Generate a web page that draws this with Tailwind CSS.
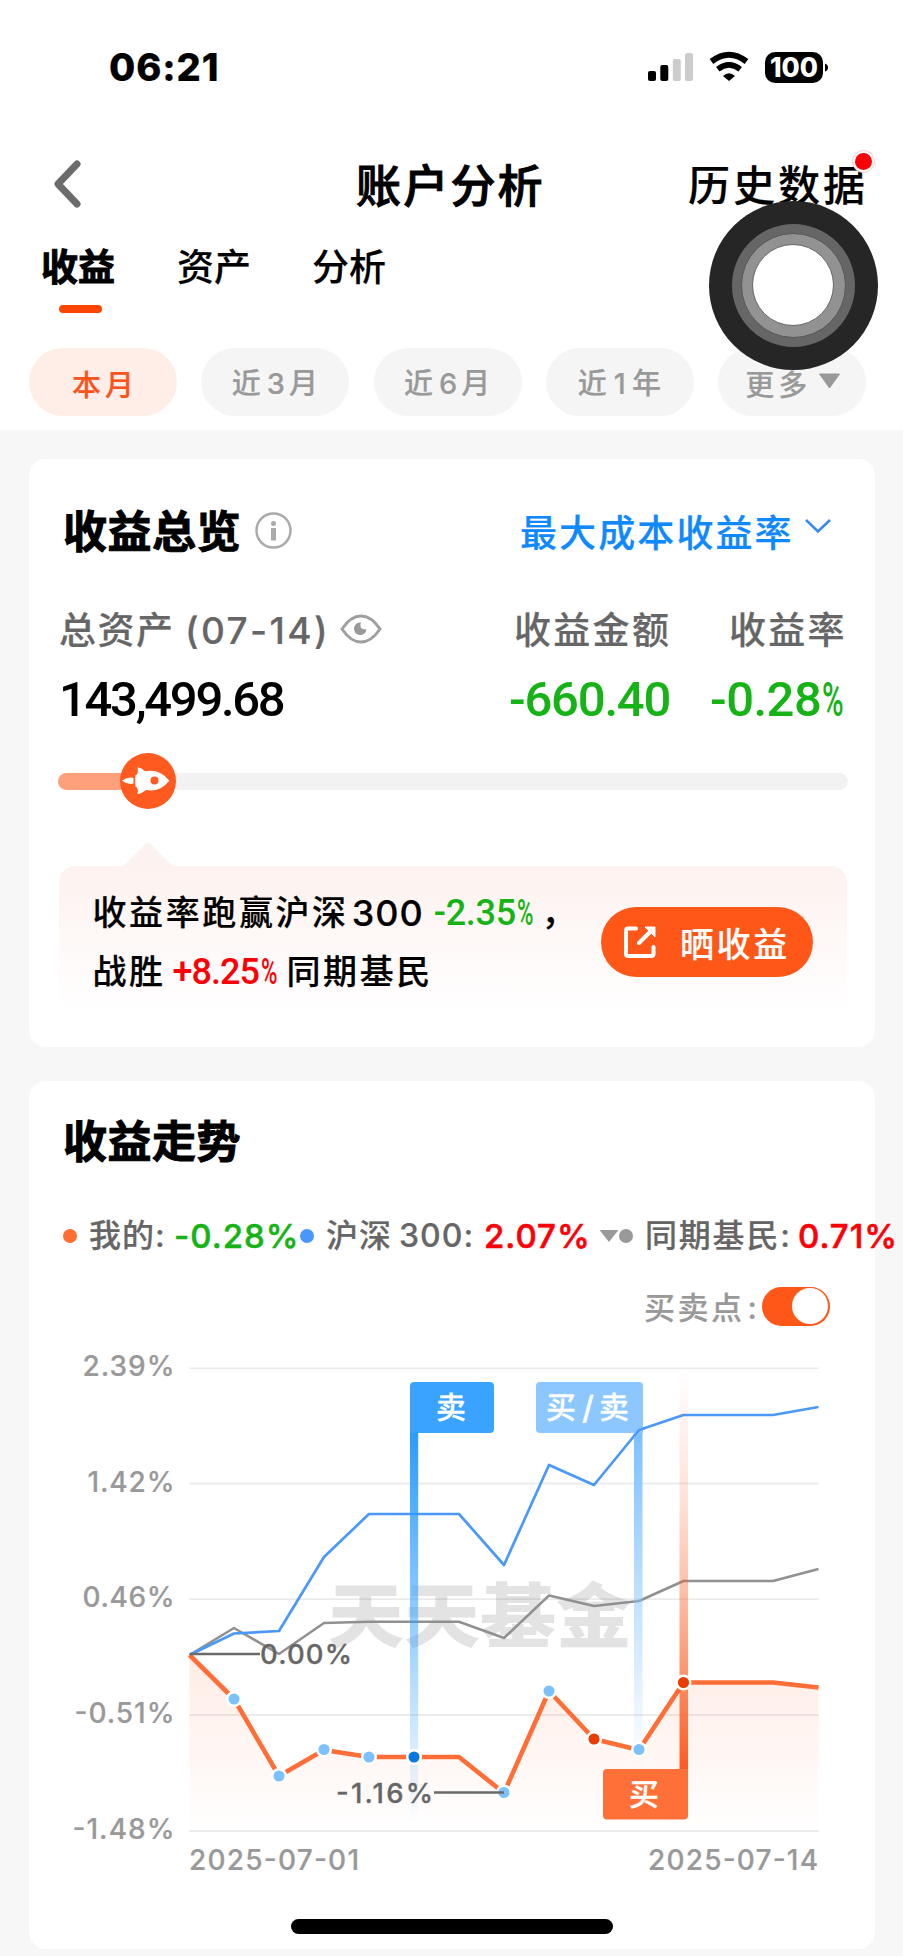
<!DOCTYPE html>
<html lang="zh-CN">
<head>
<meta charset="utf-8">
<title>账户分析</title>
<script src="https://cdn.jsdelivr.net/npm/@tailwindcss/browser@4"></script>
</head>
<body class="bg-white">
<div class="relative flex h-[1957px] w-[904px] flex-col overflow-hidden bg-white font-['Inter','Noto_Sans_CJK_SC',sans-serif] leading-none font-medium whitespace-nowrap text-black [-webkit-text-stroke:0.2px]">

  <!-- status bar -->
  <div class="flex h-[134px] shrink-0 items-center pl-[109px]">
    <div class="w-[539px] text-[38px] font-extrabold tracking-[0.9px]">06:21</div>
    <svg class="h-[36px] w-[182px]" viewBox="648 49 182 36">
      <g><rect x="648" y="71" width="8" height="10" rx="2"/><rect x="660.3" y="65" width="8" height="16" rx="2"/><rect x="672.8" y="59" width="8" height="22" rx="2" fill="#ccc"/><rect x="685" y="53" width="8" height="28" rx="2" fill="#ccc"/></g>
      <path d="M711.5 61.500Q729 48 746.500 61.500" fill="none" stroke="#000" stroke-width="6"/>
      <path d="M717.800 69.300Q729 60.500 740.200 69.300" fill="none" stroke="#000" stroke-width="5.600"/>
      <path d="M723 76Q729 70.500 735 76L729 81Z"/>
      <rect x="765" y="52" width="58" height="31" rx="10"/>
      <path d="M825 63.500Q828 64.500 828 67.500T825 71.500Z"/>
      <text x="794" y="77" text-anchor="middle" textLength="48" lengthAdjust="spacingAndGlyphs" font-size="26.500" font-weight="800" fill="#fff">100</text>
    </svg>
  </div>

  <!-- navigation -->
  <div class="flex h-[103px] shrink-0 items-center">
    <svg class="-mt-[3px] ml-[50px] h-[52px] w-[306px]" viewBox="50 158 306 52"><path d="M77 164L58 184L77 204" fill="none" stroke="#6b6b6b" stroke-width="7" stroke-linecap="round" stroke-linejoin="round"/></svg>
    <h1 class="w-[332px] pt-px text-[45px] font-medium tracking-[2.2px] [-webkit-text-stroke:1px]">账户分析</h1>
    <div class="relative text-[42px] tracking-[3px]">历史数据
      <div class="absolute -top-[15px] left-[164px] size-[23px] rounded-full border border-red-200 bg-white p-[2px]"><div class="size-full rounded-full bg-[#fb0007]"></div></div>
    </div>
  </div>

  <!-- section tabs -->
  <div class="flex h-[79px] shrink-0 pt-[11px] text-[37px]">
    <div class="ml-[41px] flex w-[136px] flex-col gap-[19px] pt-px">
      <b class="font-bold [-webkit-text-stroke:1px]">收益</b><i class="ml-[18px] block h-[8px] w-[43px] rounded-full bg-[#ff4500]"></i>
    </div>
    <div class="w-[135px] pt-px">资产</div>
    <div class="pt-px">分析</div>
  </div>

  <!-- period filter -->
  <div class="flex h-[114px] shrink-0 gap-[24.300px] pt-[32px] pl-[29px] text-[29px] tracking-[4px] text-[#999]">
    <div class="flex h-[68px] w-[148px] items-center justify-center rounded-full bg-[#ffeee8] pt-[6px] pl-[4px] text-[#fa541c]">本月</div>
    <div class="flex h-[68px] w-[148px] items-center justify-center rounded-full bg-[#f5f5f5] pt-[2px] pl-[3px]">近<span class="ml-[2px]">3</span>月</div>
    <div class="flex h-[68px] w-[148px] items-center justify-center rounded-full bg-[#f5f5f5] pt-[2px] pl-[3px]">近<span class="ml-[2px]">6</span>月</div>
    <div class="flex h-[68px] w-[148px] items-center justify-center rounded-full bg-[#f5f5f5] pt-[2px] pl-[3px]">近<span class="mr-[2px] ml-[3px]">1</span>年</div>
    <div class="flex h-[68px] w-[148px] items-center gap-[7px] rounded-full bg-[#f5f5f5] pt-[6px] pl-[27px]">更多<svg class="-mt-[8px] h-[16px] w-[23px]" viewBox="0 0 23 16"><path d="M1.500 1H21.500L11.500 15Z" fill="#999" stroke="#999" stroke-linejoin="round"/></svg></div>
  </div>

  <!-- assistive touch -->
  <div class="absolute top-[200.500px] left-[708.500px] flex size-[169px] items-center justify-center rounded-full bg-[#262626]">
    <div class="flex size-[123px] items-center justify-center rounded-full bg-[#666]"><div class="flex size-[105px] items-center justify-center rounded-full border border-[#555] bg-[#929292]"><div class="size-[82px] rounded-full border border-[#666] bg-white"></div></div></div>
  </div>

  <main class="mr-px flex h-[1526px] shrink-0 flex-col gap-[34px] bg-[#f7f7f7] px-[29px] pt-[29px]">
    <!-- overview -->
    <section class="flex h-[588px] w-[846px] shrink-0 flex-col rounded-[17px] bg-white">
      <div class="flex h-[144px] items-center pl-[34px]">
        <h2 class="w-[192px] pt-[2px] text-[44px] font-bold tracking-[0.500px] [-webkit-text-stroke:1px]">收益总览</h2>
        <svg class="-mt-px size-[37px]" viewBox="0 0 37 37"><circle cx="18.500" cy="18.500" r="17" fill="none" stroke="#aaa" stroke-width="2.500"/><circle cx="18.500" cy="11.500" r="2.500" fill="#aaa"/><path d="M18.500 16V28.500" stroke="#aaa" stroke-width="5"/></svg>
        <div class="ml-[228px] pt-[4px] text-[37px] tracking-[2.100px] text-[#1089ff]">最大成本收益率</div>
        <svg class="-mt-[10px] ml-[10px] h-[16px] w-[28px]" viewBox="0 0 28 16"><path d="M2 2L14 13.500L26 2" fill="none" stroke="#3b86f5" stroke-width="2.500"/></svg>
      </div>
      <div class="flex h-[54px] items-center pl-[30px] text-[37px] tracking-[1.500px] text-[#666]">
        <div class="w-[281px] shrink-0">总资产 <span class="ml-[-1px] tracking-[2.400px]">(07-14)</span></div>
        <svg class="-mt-[3px] h-[32px] w-[42px]" viewBox="0 0 42 32"><path d="M2 16C8 7 14 3 21 3S34 7 40 16C34 25 28 29 21 29S8 25 2 16Z" fill="none" stroke="#a0a0a0" stroke-width="3"/><path d="M21 9.500Q18 16 26.500 16.500A6.300 6.300 0 1 1 21 9.500Z" fill="#999"/></svg>
        <div class="ml-[132px] w-[215px] tracking-[2.300px]">收益金额</div>
        <div class="tracking-[2.300px]">收益率</div>
      </div>
      <div class="flex h-[84px] items-center pl-[30px] font-['Roboto',sans-serif] text-[49px] [-webkit-text-stroke:0px]">
        <div class="w-[450px] tracking-[-2.300px]">143,499.68</div>
        <div class="w-[201px] tracking-[-1.200px] text-[#16b316]">-660.40</div>
        <div class="tracking-[-0.500px] text-[#16b316]">-0.28<span class="ml-px inline-block w-[22px] origin-left scale-x-60">%</span></div>
      </div>
      <div class="flex h-[80px] items-center pl-[29px]">
        <div class="relative h-[17px] w-[790px] rounded-full bg-[#f2f2f2]">
          <div class="h-full w-[90px] rounded-full bg-[#ffa07d]"></div>
          <svg class="absolute -top-[20px] left-[62px] size-[56px]" viewBox="0 0 56 56"><circle cx="28" cy="28" r="28" fill="#ff5a1f"/><path fill="#fff" d="M2 27.700Q8 23.500 13.500 25V30.500Q8 32 2 27.700ZM15.300 22.500Q19 21 17.500 14.300Q22 15 25 18.300Q40 15.500 49.300 27.700Q40 39.500 26 37Q22 40.500 17.500 41.300Q19 35 15.300 33.500Z"/><circle cx="34.500" cy="27.500" r="4" fill="#ff5a1f"/></svg>
        </div>
      </div>
      <svg class="mt-[20px] ml-[91px] h-[25px] w-[56px] shrink-0" viewBox="0 0 56 25"><path d="M3 25L25 3Q28 0 31 3L53 25Z" fill="#fcf3f0"/></svg>
      <div class="ml-[30px] flex h-[147px] w-[788px] shrink-0 rounded-[16px] bg-linear-to-b from-[#fdf2ef] to-white pl-[33.500px] text-[34px] tracking-[2.600px]">
        <div class="flex w-[508.500px] flex-col gap-[23px] pt-[29px]">
          <div class="flex items-center">收益率跑赢沪深<span class="ml-[3px] w-[82px] text-[36px] tracking-[1px]">300</span><span class="w-[108px] font-['Roboto',sans-serif] text-[36px] tracking-[-0.300px] text-[#16b316] [-webkit-text-stroke:0px]">-2.35<span class="ml-px inline-block w-[17px] origin-left scale-x-62">%</span></span>，</div>
          <div class="flex items-center"><span class="w-[80px]">战胜</span><span class="w-[114px] font-['Roboto',sans-serif] text-[36px] tracking-[-1px] text-[#fb0007] [-webkit-text-stroke:0px]">+8.25<span class="ml-[2px] inline-block w-[17px] origin-left scale-x-62">%</span></span>同期基民</div>
        </div>
        <div class="mt-[41px] flex h-[70px] w-[212px] items-center rounded-full bg-[#ff5718] pl-[22px] text-white">
          <svg class="mr-[23px] size-[34px]" viewBox="0 0 34 34"><g fill="none" stroke="#fff" stroke-width="4" stroke-linecap="round"><path d="M13 3.500H5Q3 3.500 3 5.500V29Q3 31 5 31H28.500Q30.500 31 30.500 29V22"/><path d="M16 18L28 6"/></g><path d="M22 2H32V12Z" fill="#fff" stroke="#fff" stroke-linejoin="round"/></svg><span class="pt-[5px]">晒收益</span>
        </div>
      </div>
    </section>

    <!-- trend -->
    <section class="flex h-[868px] w-[846px] shrink-0 flex-col rounded-[17px] bg-white">
      <h2 class="flex h-[120px] items-center pt-px pl-[34px] text-[44px] font-bold tracking-[0.500px] [-webkit-text-stroke:1px]">收益走势</h2>
      <div class="flex h-[70px] items-center pl-[34px] text-[32px] tracking-[1px] text-[#666]">
        <i class="mr-[12px] size-[14px] shrink-0 rounded-full bg-[#ff6e32]"></i>
        <span class="w-[85px] shrink-0">我的:</span><span class="w-[126px] shrink-0 text-[33px] text-[#16b316] [-webkit-text-stroke:0.5px]">-0.28%</span>
        <i class="mr-[12px] size-[14px] shrink-0 rounded-full bg-[#4a98ff]"></i>
        <span class="w-[158px] shrink-0">沪深<span class="ml-[7px]">300:</span></span><span class="w-[115px] shrink-0 text-[33px] text-[#fb0007] [-webkit-text-stroke:0.6px]">2.07%</span>
        <svg class="h-[12px] w-[20px] shrink-0" viewBox="0 0 19 12"><path d="M0 0H19L9.500 12Z" fill="#999"/></svg>
        <i class="mr-[12px] size-[14px] shrink-0 rounded-full bg-[#999]"></i>
        <span class="w-[153px] shrink-0 tracking-[1.800px]">同期基民:</span><span class="shrink-0 text-[33px] text-[#fb0007] [-webkit-text-stroke:0.6px]">0.71%</span>
      </div>
      <div class="flex h-[70px] items-center pl-[615px] text-[31px] tracking-[2.500px] text-[#999]">
        <span class="w-[118px] pt-[2px]">买卖点<span class="ml-[3px]">:</span></span>
        <div class="flex h-[39px] w-[68px] items-center justify-end rounded-full bg-[#ff5718] pr-[2px]"><div class="size-[36px] rounded-full bg-white"></div></div>
      </div>
      <svg class="h-[560px] w-[846px] shrink-0" viewBox="29 1341 846 560" font-size="28">
        <defs>
          <linearGradient id="area" x1="0" y1="1655" x2="0" y2="1831" gradientUnits="userSpaceOnUse"><stop offset="0" stop-color="#ff6e37" stop-opacity=".13"/><stop offset="1" stop-color="#ff6e37" stop-opacity="0"/></linearGradient>
          <linearGradient id="sell" x1="0" y1="0" x2="0" y2="1"><stop offset="0" stop-color="#2a9bff"/><stop offset="1" stop-color="#3aa3ff" stop-opacity="0"/></linearGradient>
          <linearGradient id="both" x1="0" y1="0" x2="0" y2="1"><stop offset="0" stop-color="#7cc0ff"/><stop offset="1" stop-color="#8cc8ff" stop-opacity="0"/></linearGradient>
          <linearGradient id="buy" x1="0" y1="0" x2="0" y2="1"><stop offset="0" stop-color="#ff5a20" stop-opacity="0"/><stop offset=".33" stop-color="#ff5a20" stop-opacity=".18"/><stop offset=".58" stop-color="#ff5a20" stop-opacity=".42"/><stop offset=".8" stop-color="#ff5a20" stop-opacity=".7"/><stop offset="1" stop-color="#ff5a20"/></linearGradient>
        </defs>
        <text x="328" y="1642" font-size="70" font-weight="900" textLength="304" lengthAdjust="spacingAndGlyphs" fill="#e3e3e3">天天基金</text>
        <path d="M189.500 1368.300H818.500M189.500 1483.500H818.500M189.500 1599.200H818.500M189.500 1715H818.500M189.500 1831H818.500" stroke="#000" stroke-opacity=".08" stroke-width="1.800"/>
        <path fill="url(#area)" d="M189.500 1655L234 1699L279 1776L324 1750L369 1757H459L504 1793L549 1691L594 1739L639 1750L683.500 1682.500H773L818.500 1687.500V1831H189.500Z"/>
        <g fill="none" stroke-linejoin="round">
          <path stroke="#909090" stroke-width="2.500" d="M189.500 1655L234 1628L279 1654L324 1623L369 1621.700H459L504 1638L549 1595.500L594 1606L639 1601L683.500 1581H773L818.500 1569"/>
          <path stroke="#4a98f8" stroke-width="2.700" d="M189.500 1655L234 1633.500L279 1631L324 1557L369 1514H459L504 1565L549 1465L594 1485L639 1430L683.500 1415H773L818.500 1407"/>
        </g>
        <rect x="410" y="1433" width="8.200" height="390" fill="url(#sell)"/>
        <rect x="634" y="1433" width="8.500" height="335" fill="url(#both)"/>
        <path fill="none" stroke="#ff6e37" stroke-width="4.600" stroke-linejoin="round" d="M189.500 1655L234 1699L279 1776L324 1750L369 1757H459L504 1793L549 1691L594 1739L639 1750L683.500 1682.500H773L818.500 1687.500"/>
        <rect x="679.500" y="1370" width="8.500" height="400" fill="url(#buy)"/>
        <path d="M414 1382H490Q494 1382 494 1386V1429Q494 1433 490 1433H410V1386Q410 1382 414 1382Z" fill="#3aa3ff"/>
        <path d="M540 1382H639Q643 1382 643 1386V1433H540Q536 1433 536 1429V1386Q536 1382 540 1382Z" fill="#8cc8ff"/>
        <path d="M634 1436L639 1430L645 1428" fill="none" stroke="#4a98f8" stroke-width="2.400"/>
        <path d="M607 1769H688V1815.500Q688 1819.500 684 1819.500H607Q603 1819.500 603 1815.500V1773Q603 1769 607 1769Z" fill="#ff7038"/>
        <g fill="#fff" stroke="#fff" stroke-width=".3" font-size="30"><text x="436" y="1418">卖</text><text x="546" y="1418">买</text><text x="582" y="1419" font-size="32">/</text><text x="599" y="1418">卖</text><text x="629" y="1805">买</text></g>
        <g stroke="#fff" stroke-width="2.500" fill="#7cc0fc">
          <circle cx="234" cy="1699" r="6.800"/><circle cx="279" cy="1776" r="6.800"/><circle cx="324" cy="1749.500" r="6.800"/><circle cx="369" cy="1757" r="6.800"/><circle cx="414" cy="1757" r="6.800" fill="#0878e0"/><circle cx="504" cy="1792.500" r="6.800"/><circle cx="549" cy="1691" r="6.800"/><circle cx="594" cy="1739" r="6.800" fill="#e83c00"/><circle cx="639" cy="1749.500" r="6.800"/><circle cx="683.500" cy="1682.500" r="6.800" fill="#e83c00"/>
        </g>
        <path d="M190 1654H260M434 1792.500H504" stroke="#6a6a6a" stroke-width="2.600"/>
        <g fill="#666" stroke="#666" stroke-width=".3"><text x="260" y="1664" font-size="27.500" textLength="92">0.00%</text><text x="336" y="1803" font-size="27.500" textLength="97">-1.16%</text></g>
        <g fill="#999" stroke="#999" stroke-width=".2">
          <g text-anchor="end"><text x="174.500" y="1376" textLength="92">2.39%</text><text x="174.500" y="1491.500" textLength="87">1.42%</text><text x="174.500" y="1607" textLength="92">0.46%</text><text x="174.500" y="1723" textLength="100">-0.51%</text><text x="174.500" y="1839" textLength="102">-1.48%</text></g>
          <text x="189" y="1869.500" textLength="170">2025-07-01</text><text x="648" y="1869.500" textLength="170">2025-07-14</text>
        </g>
      </svg>
    </section>
  </main>
  <div class="absolute top-[1919px] left-[291px] h-[14.500px] w-[322px] rounded-full bg-black"></div>
</div>
</body>
</html>
